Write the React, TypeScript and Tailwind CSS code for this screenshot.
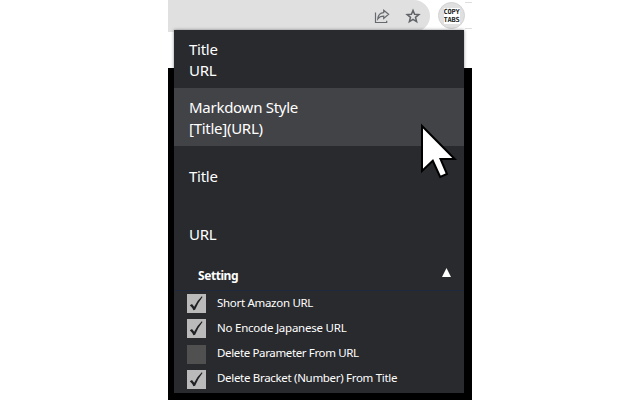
const formats = [
  { lines: ["Title", "URL"], active: false, pad: "pt-px" },
  { lines: ["Markdown Style", "[Title](URL)"], active: true, pad: "pt-px" },
  { lines: ["Title"], active: false, pad: "pt-[3px]" },
  { lines: ["URL"], active: false, pad: "pt-[3px]" },
];

const settings = [
  { label: "Short Amazon URL", checked: true, spacing: "pb-[2px] tracking-[-0.3px]" },
  { label: "No Encode Japanese URL", checked: true, spacing: "pb-[2px] tracking-[-0.23px]" },
  { label: "Delete Parameter From URL", checked: false, spacing: "pb-[4px] tracking-[-0.36px]" },
  { label: "Delete Bracket (Number) From Title", checked: true, spacing: "pb-[4px] tracking-[-0.31px]" },
];

function Toolbar() {
  return (
    <div className="flex h-8 bg-white">
      <div className="flex h-8 w-[262px] items-center justify-end gap-[15px] rounded-r-[16px] bg-[#e0e0e0] pr-[9px]">
        <svg className="h-4 w-4" viewBox="0 0 16 16" fill="none" stroke="#66696e" strokeWidth="1.2">
          <path d="M1.5 4.5V14.5H12.7V12.8" />
          <path d="M9.7 2.3L14.6 6.3L9.7 10.5V8.1C7 8.1 5.1 9 3.8 10.8C4.1 7.4 6.3 5 9.7 4.7Z" />
        </svg>
        <svg className="h-4 w-4" viewBox="0 0 16 16" fill="none" stroke="#606368" strokeWidth="1.5">
          <path d="M8 2.4L9.6 6.3L13.8 6.6L10.5 9.3L11.6 13.6L8 11.3L4.4 13.6L5.5 9.3L2.2 6.6L6.4 6.3Z" />
        </svg>
      </div>
      <div className="ml-2 mt-[2px] flex h-[27px] w-[27px] items-center justify-center rounded-full border border-[#d2d2d2] bg-[#e0e0e0]">
        <div className="flex h-4 w-4 flex-col justify-center overflow-hidden bg-white font-['DejaVu_Sans_Mono',monospace] text-[7px] font-bold leading-[8px] tracking-[-0.2px] text-[#252525]">
          <span>COPY</span>
          <span>TABS</span>
        </div>
      </div>
      <div className="h-[29px] flex-1 border-b border-[#dedede] pt-[2px]">
        <div className="h-px bg-[#dedede]" />
      </div>
    </div>
  );
}

function Checkbox({ checked }: { checked: boolean }) {
  return (
    <span className={`block h-[19px] w-[19px] shrink-0 ${checked ? "bg-[#bababa]" : "bg-[#505050]"}`}>
      {checked && (
        <svg className="h-[19px] w-[19px]" viewBox="0 0 19 19">
          <path d="M2.8 11.3L5 10L7.2 12.8Q10.2 6.4 14.8 2.2L15.5 3Q11.2 8.2 8.1 15.8L6.4 16.3Q5.1 13.3 2.8 11.3Z" fill="#202124" />
        </svg>
      )}
    </span>
  );
}

export default function App() {
  return (
    <div className="h-[400px] w-[640px] overflow-hidden bg-white font-['Noto_Sans','Open_Sans',sans-serif] text-white">
      <div className="relative ml-[168px] h-[400px] w-[304px]">
        <Toolbar />
        <div className="h-9 bg-white" />
        <div className="h-[332px] bg-black" />

        <main className="absolute left-[6px] top-[30px] flex h-[363px] w-[290px] flex-col bg-[#292a2e] shadow-[0_0_3px_rgba(0,0,0,0.45)]">
          {formats.map((format, index) => (
            <div
              key={index}
              className={`flex h-[58px] shrink-0 flex-col justify-center pl-[15px] text-[15px] leading-[21px] ${format.pad} ${format.active ? "bg-[#424346]" : ""}`}
            >
              {format.lines.map((line) => (
                <div key={line} className="tracking-[-0.27px] whitespace-nowrap">{line}</div>
              ))}
            </div>
          ))}
          <div className="flex h-[29px] shrink-0 items-center justify-between border-b border-[#202840] pl-6 pr-[13px] text-[12px] font-bold">
            <span className="tracking-[-0.45px]">Setting</span>
            <svg className="mb-[7px] h-[9px] w-[9px]" viewBox="0 0 9 9">
              <path d="M4.5 0L9 9H0Z" fill="white" />
            </svg>
          </div>
          <div className="flex flex-col gap-[6.3px] pl-[13px] pt-[3px]">
            {settings.map((setting) => (
              <div key={setting.label} className="flex h-[19px] items-center gap-[11px]">
                <Checkbox checked={setting.checked} />
                <span className={`text-[11.5px] leading-[17px] whitespace-nowrap ${setting.spacing}`}>{setting.label}</span>
              </div>
            ))}
          </div>
        </main>

        <svg className="absolute left-[252px] top-[123px] h-[58px] w-[38px]" viewBox="0 0 38 58">
          <path d="M2 3V48L12.8 37.8L20.2 54L27 51L20.5 36L34.7 36Z" fill="white" stroke="black" strokeWidth="2" />
        </svg>
      </div>
    </div>
  );
}
